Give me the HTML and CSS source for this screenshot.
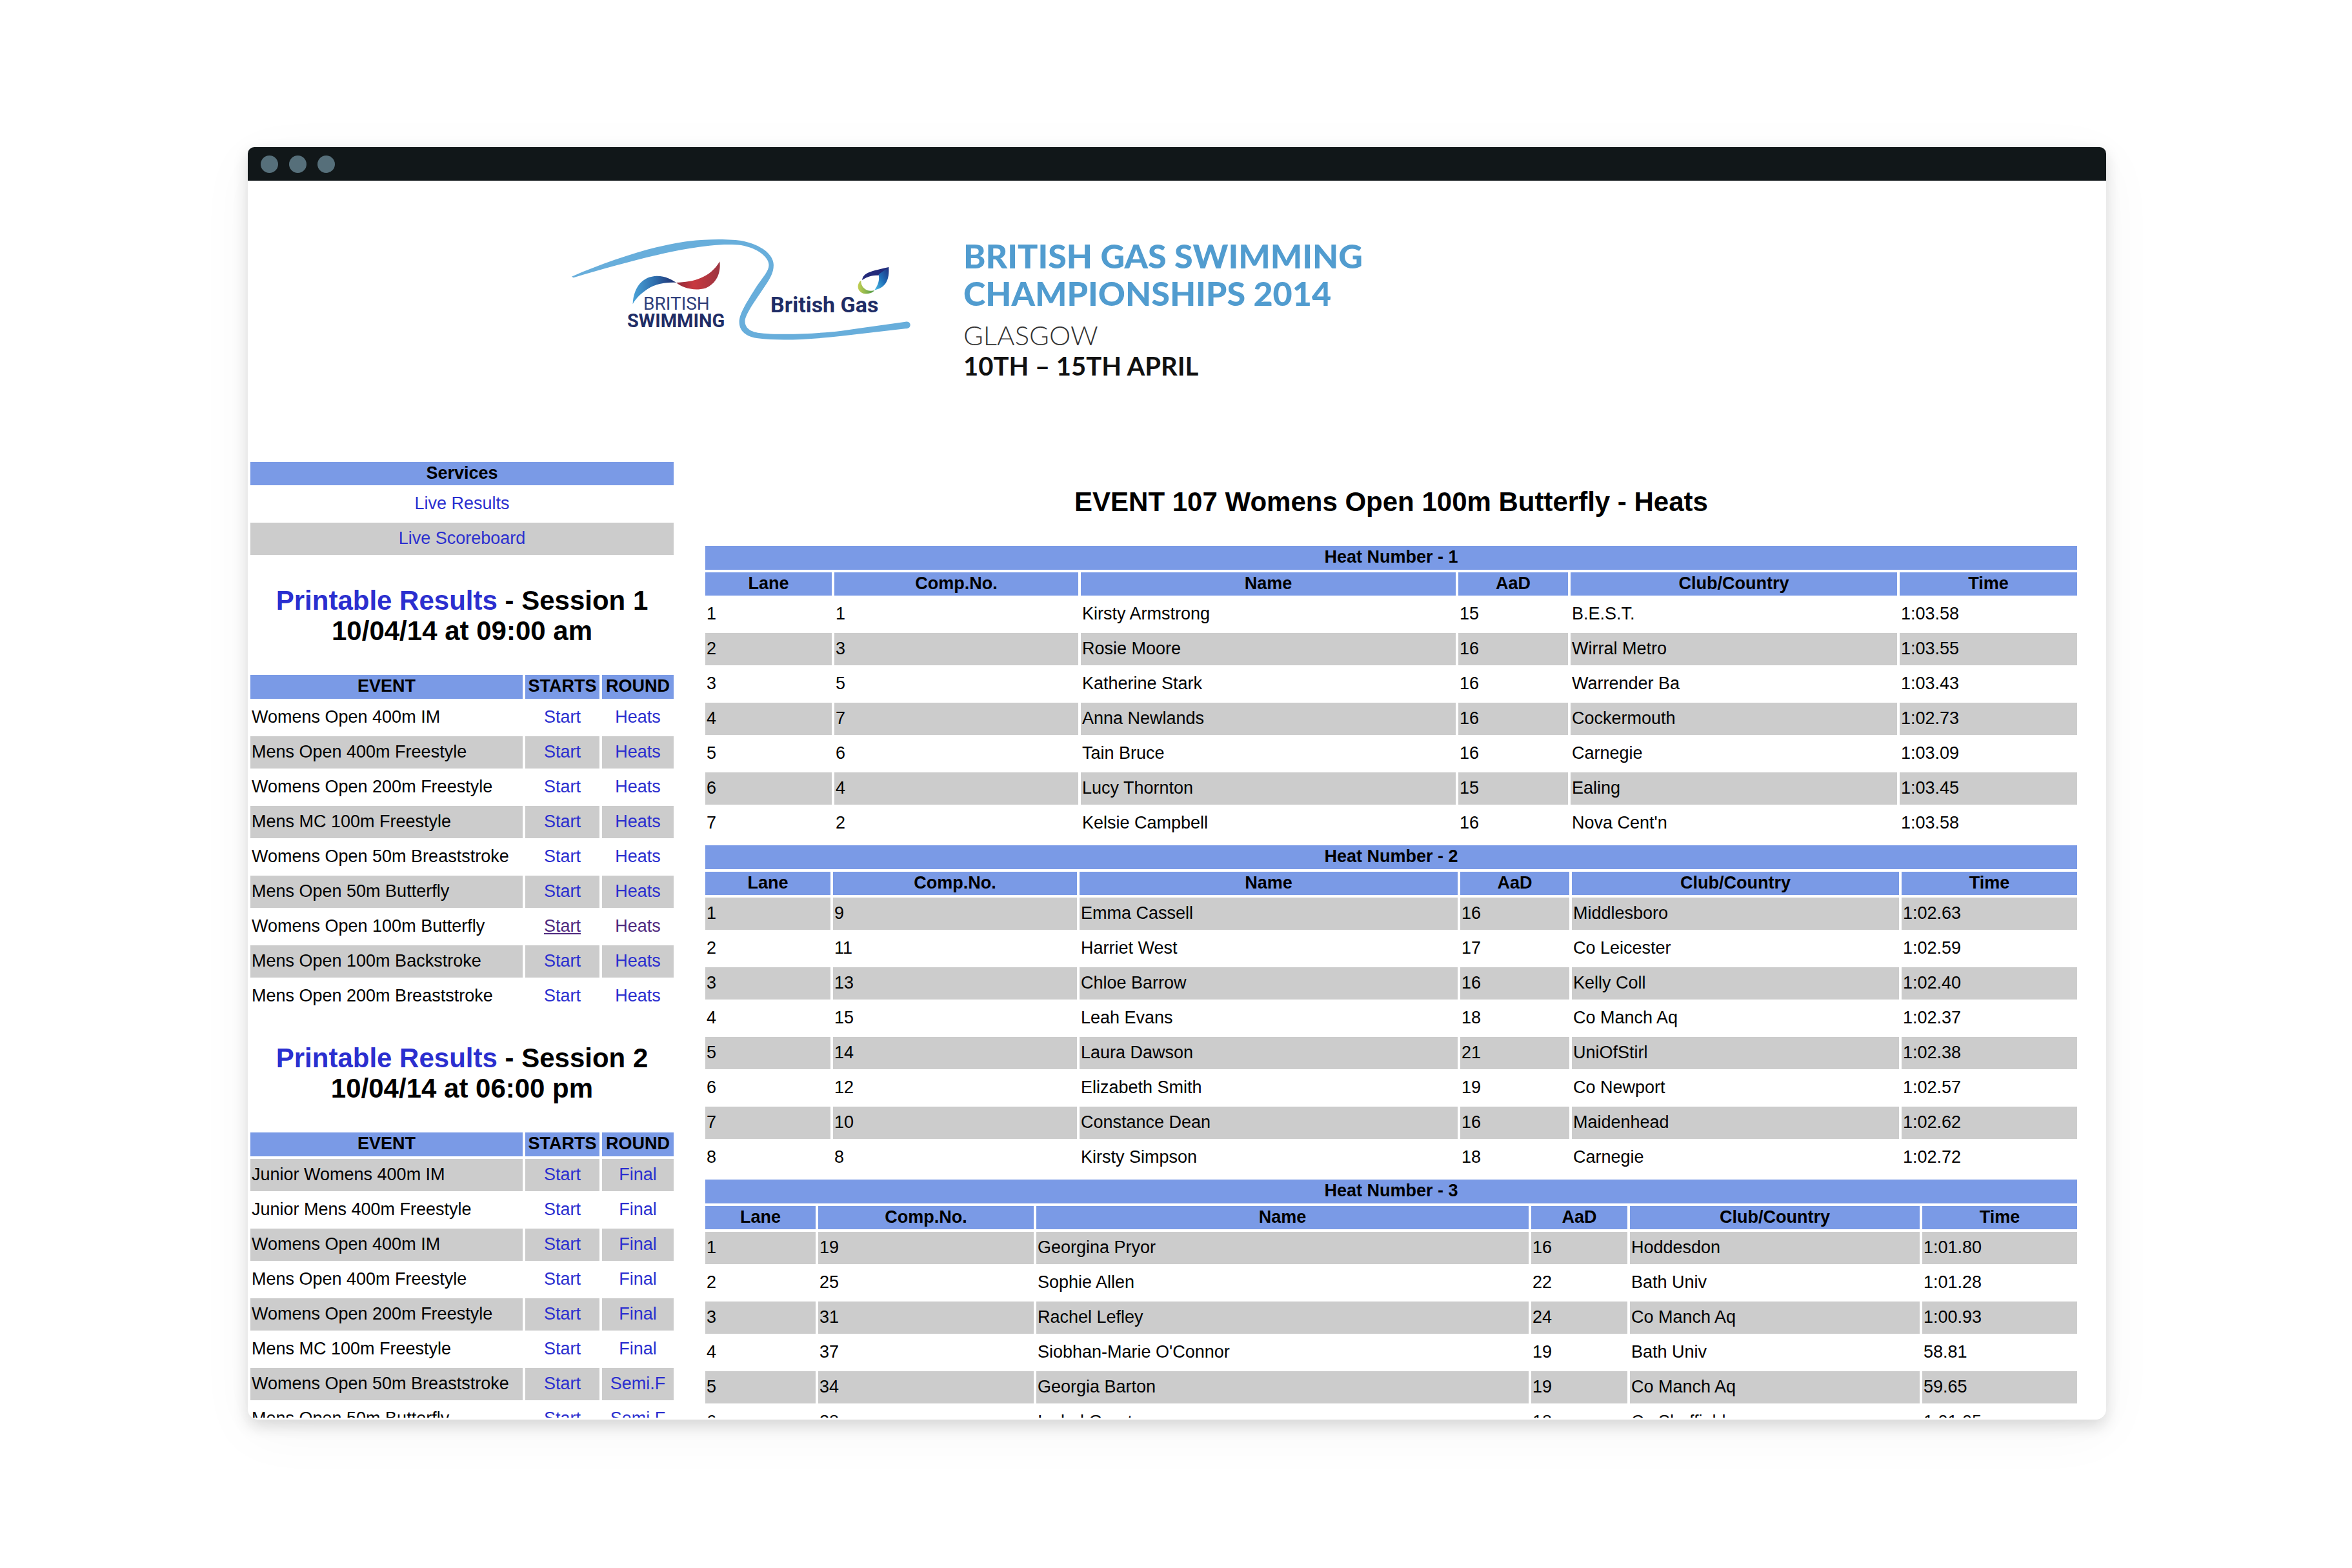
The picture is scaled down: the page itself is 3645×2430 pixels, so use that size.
FILE: index.html
```html
<!DOCTYPE html>
<html lang="en">
<head>
<meta charset="utf-8">
<title>British Gas Swimming Championships 2014 - Results</title>
<link rel="stylesheet" href="styles.css">
</head>
<body>
<div class="window">
  <div class="titlebar"><span class="dot"></span><span class="dot"></span><span class="dot"></span></div>
  <div class="viewport">
    <header class="banner">
      <svg class="logo" viewBox="0 0 580 220" role="img" aria-label="British Swimming and British Gas">
        <defs>
          <linearGradient id="wave" x1="0" x2="1"><stop offset="0" stop-color="#4aa3d8"/><stop offset=".5" stop-color="#2f6fae"/><stop offset="1" stop-color="#1d2a6b"/></linearGradient>
          <linearGradient id="red" x1="0" x2="1"><stop offset="0" stop-color="#8c2a38"/><stop offset=".4" stop-color="#c8383f"/><stop offset="1" stop-color="#9c3440"/></linearGradient>
          <linearGradient id="flame" x1="1" y1="0" x2="0" y2="1"><stop offset="0" stop-color="#1f2d7c"/><stop offset=".5" stop-color="#1f6fb8"/><stop offset="1" stop-color="#4fc0e8"/></linearGradient>
          <linearGradient id="leaf" x1="0" x2="1"><stop offset="0" stop-color="#c3cf52"/><stop offset="1" stop-color="#4f9a48"/></linearGradient>
        </defs>
        <g transform="scale(.37 .3333)">
          <path fill="#68aedb" d="M70 266C240 185 430 118 560 101C640 90 740 90 790 101C860 118 916 160 916 212C916 250 900 275 880 310C850 362 796 440 796 474C796 500 812 520 850 527C940 540 1090 532 1200 518L1468 476C1484 474 1490 484 1488 494C1486 504 1478 508 1468 508L1200 542C1080 558 940 566 850 553C800 547 772 518 772 478C772 440 800 390 848 306C870 270 896 240 896 212C896 176 850 134 780 120C720 112 640 120 560 136C430 160 250 214 78 271Z"/>
          <path fill="url(#wave)" d="M326 394C330 310 370 264 428 263C464 263 490 280 508 294C470 292 430 298 400 316C366 338 342 362 326 394Z"/>
          <path fill="url(#red)" d="M508 294C580 292 650 272 690 196C696 250 676 300 630 320C580 334 536 318 508 294Z"/>
          <path fill="#232a7a" d="M1287 283C1290 245 1330 240 1398 222C1390 250 1370 262 1345 260C1320 262 1300 270 1287 283Z"/>
          <path fill="url(#flame)" d="M1398 222C1402 280 1386 318 1338 329C1354 305 1360 285 1356 256Z"/>
          <path fill="url(#leaf)" d="M1282 284C1262 300 1264 340 1300 346C1318 346 1332 340 1338 330C1310 340 1280 318 1282 284Z"/>
        </g>
        <text class="logo-light" x="137" y="140">BRITISH</text>
        <text class="logo-bold" x="112" y="167">SWIMMING</text>
        <text class="logo-gas" x="334" y="144">British Gas</text>
      </svg>
      <div class="banner-text">
        <p class="meet">BRITISH GAS SWIMMING<br>CHAMPIONSHIPS 2014</p>
        <p class="city">GLASGOW</p>
        <p class="dates">10TH – 15TH APRIL</p>
      </div>
    </header>
    <div class="columns">
      <aside class="sidebar">
        <table class="grid services">
          <thead><tr><th>Services</th></tr></thead>
          <tbody>
            <tr><td><a href="#results">Live Results</a></td></tr>
            <tr class="shade"><td><a href="#scoreboard">Live Scoreboard</a></td></tr>
          </tbody>
        </table>

        <h2><a href="#s1">Printable Results</a> - Session 1<br>10/04/14 at 09:00 am</h2>
        <table class="grid events">
          <colgroup><col><col class="w-starts"><col class="w-round"></colgroup>
          <thead><tr><th>EVENT</th><th>STARTS</th><th>ROUND</th></tr></thead>
          <tbody>
            <tr><td>Womens Open 400m IM</td><td><a href="#">Start</a></td><td><a href="#">Heats</a></td></tr>
            <tr class="shade"><td>Mens Open 400m Freestyle</td><td><a href="#">Start</a></td><td><a href="#">Heats</a></td></tr>
            <tr><td>Womens Open 200m Freestyle</td><td><a href="#">Start</a></td><td><a href="#">Heats</a></td></tr>
            <tr class="shade"><td>Mens MC 100m Freestyle</td><td><a href="#">Start</a></td><td><a href="#">Heats</a></td></tr>
            <tr><td>Womens Open 50m Breaststroke</td><td><a href="#">Start</a></td><td><a href="#">Heats</a></td></tr>
            <tr class="shade"><td>Mens Open 50m Butterfly</td><td><a href="#">Start</a></td><td><a href="#">Heats</a></td></tr>
            <tr><td>Womens Open 100m Butterfly</td><td><a class="seen current" href="#">Start</a></td><td><a class="seen" href="#">Heats</a></td></tr>
            <tr class="shade"><td>Mens Open 100m Backstroke</td><td><a href="#">Start</a></td><td><a href="#">Heats</a></td></tr>
            <tr><td>Mens Open 200m Breaststroke</td><td><a href="#">Start</a></td><td><a href="#">Heats</a></td></tr>
          </tbody>
        </table>

        <h2><a href="#s2">Printable Results</a> - Session 2<br>10/04/14 at 06:00 pm</h2>
        <table class="grid events">
          <colgroup><col><col class="w-starts"><col class="w-round"></colgroup>
          <thead><tr><th>EVENT</th><th>STARTS</th><th>ROUND</th></tr></thead>
          <tbody>
            <tr class="shade"><td>Junior Womens 400m IM</td><td><a href="#">Start</a></td><td><a href="#">Final</a></td></tr>
            <tr><td>Junior Mens 400m Freestyle</td><td><a href="#">Start</a></td><td><a href="#">Final</a></td></tr>
            <tr class="shade"><td>Womens Open 400m IM</td><td><a href="#">Start</a></td><td><a href="#">Final</a></td></tr>
            <tr><td>Mens Open 400m Freestyle</td><td><a href="#">Start</a></td><td><a href="#">Final</a></td></tr>
            <tr class="shade"><td>Womens Open 200m Freestyle</td><td><a href="#">Start</a></td><td><a href="#">Final</a></td></tr>
            <tr><td>Mens MC 100m Freestyle</td><td><a href="#">Start</a></td><td><a href="#">Final</a></td></tr>
            <tr class="shade"><td>Womens Open 50m Breaststroke</td><td><a href="#">Start</a></td><td><a href="#">Semi.F</a></td></tr>
            <tr><td>Mens Open 50m Butterfly</td><td><a href="#">Start</a></td><td><a href="#">Semi.F</a></td></tr>
          </tbody>
        </table>
      </aside>

      <main class="results">
        <h1>EVENT 107 Womens Open 100m Butterfly - Heats</h1>
        <div class="heats">
          <table class="grid heat">
            <colgroup><col class="a-lane"><col class="a-comp"><col><col class="a-aad"><col class="a-club"><col class="a-time"></colgroup>
            <thead>
              <tr><th colspan="6">Heat Number - 1</th></tr>
              <tr class="labels"><th>Lane</th><th>Comp.No.</th><th>Name</th><th>AaD</th><th>Club/Country</th><th>Time</th></tr>
            </thead>
            <tbody>
              <tr><td>1</td><td>1</td><td>Kirsty Armstrong</td><td>15</td><td>B.E.S.T.</td><td>1:03.58</td></tr>
              <tr class="shade"><td>2</td><td>3</td><td>Rosie Moore</td><td>16</td><td>Wirral Metro</td><td>1:03.55</td></tr>
              <tr><td>3</td><td>5</td><td>Katherine Stark</td><td>16</td><td>Warrender Ba</td><td>1:03.43</td></tr>
              <tr class="shade"><td>4</td><td>7</td><td>Anna Newlands</td><td>16</td><td>Cockermouth</td><td>1:02.73</td></tr>
              <tr><td>5</td><td>6</td><td>Tain Bruce</td><td>16</td><td>Carnegie</td><td>1:03.09</td></tr>
              <tr class="shade"><td>6</td><td>4</td><td>Lucy Thornton</td><td>15</td><td>Ealing</td><td>1:03.45</td></tr>
              <tr><td>7</td><td>2</td><td>Kelsie Campbell</td><td>16</td><td>Nova Cent'n</td><td>1:03.58</td></tr>
            </tbody>
          </table>
          <table class="grid heat">
            <colgroup><col class="b-lane"><col class="a-comp"><col><col class="b-aad"><col class="b-club"><col class="b-time"></colgroup>
            <thead>
              <tr><th colspan="6">Heat Number - 2</th></tr>
              <tr class="labels"><th>Lane</th><th>Comp.No.</th><th>Name</th><th>AaD</th><th>Club/Country</th><th>Time</th></tr>
            </thead>
            <tbody>
              <tr class="shade"><td>1</td><td>9</td><td>Emma Cassell</td><td>16</td><td>Middlesboro</td><td>1:02.63</td></tr>
              <tr><td>2</td><td>11</td><td>Harriet West</td><td>17</td><td>Co Leicester</td><td>1:02.59</td></tr>
              <tr class="shade"><td>3</td><td>13</td><td>Chloe Barrow</td><td>16</td><td>Kelly Coll</td><td>1:02.40</td></tr>
              <tr><td>4</td><td>15</td><td>Leah Evans</td><td>18</td><td>Co Manch Aq</td><td>1:02.37</td></tr>
              <tr class="shade"><td>5</td><td>14</td><td>Laura Dawson</td><td>21</td><td>UniOfStirl</td><td>1:02.38</td></tr>
              <tr><td>6</td><td>12</td><td>Elizabeth Smith</td><td>19</td><td>Co Newport</td><td>1:02.57</td></tr>
              <tr class="shade"><td>7</td><td>10</td><td>Constance Dean</td><td>16</td><td>Maidenhead</td><td>1:02.62</td></tr>
              <tr><td>8</td><td>8</td><td>Kirsty Simpson</td><td>18</td><td>Carnegie</td><td>1:02.72</td></tr>
            </tbody>
          </table>
          <table class="grid heat">
            <colgroup><col class="c-lane"><col class="c-comp"><col><col class="c-aad"><col class="c-club"><col class="c-time"></colgroup>
            <thead>
              <tr><th colspan="6">Heat Number - 3</th></tr>
              <tr class="labels"><th>Lane</th><th>Comp.No.</th><th>Name</th><th>AaD</th><th>Club/Country</th><th>Time</th></tr>
            </thead>
            <tbody>
              <tr class="shade"><td>1</td><td>19</td><td>Georgina Pryor</td><td>16</td><td>Hoddesdon</td><td>1:01.80</td></tr>
              <tr><td>2</td><td>25</td><td>Sophie Allen</td><td>22</td><td>Bath Univ</td><td>1:01.28</td></tr>
              <tr class="shade"><td>3</td><td>31</td><td>Rachel Lefley</td><td>24</td><td>Co Manch Aq</td><td>1:00.93</td></tr>
              <tr><td>4</td><td>37</td><td>Siobhan-Marie O'Connor</td><td>19</td><td>Bath Univ</td><td>58.81</td></tr>
              <tr class="shade"><td>5</td><td>34</td><td>Georgia Barton</td><td>19</td><td>Co Manch Aq</td><td>59.65</td></tr>
              <tr><td>6</td><td>28</td><td>Isobel Grant</td><td>18</td><td>Co Sheffield</td><td>1:01.05</td></tr>
            </tbody>
          </table>
        </div>
      </main>
    </div>
  </div>
</div>
</body>
</html>
```
FILE: styles.css
```css
* { box-sizing: border-box; }

body {
  min-height: 100vh;
  margin: 0;
  padding: 228px 381px 230px 384px;
  background: #fff;
  color: #000;
  font: 27px/31px "Liberation Sans", Arial, sans-serif;
}

.window {
  display: flex;
  flex-direction: column;
  height: calc(100vh - 458px);
  padding-bottom: 3px;
  background: #fff;
  border-radius: 10px 10px 16px 16px;
  box-shadow: 0 10px 24px rgba(0, 0, 0, .14), 0 20px 90px rgba(0, 0, 0, .04);
}

.titlebar {
  display: flex;
  flex: none;
  align-items: center;
  gap: 17px;
  height: 52px;
  padding-left: 20px;
  background: #111719;
  border-radius: 10px 10px 0 0;
}
.dot { width: 27px; height: 27px; border-radius: 50%; background: #566f7a; }

.viewport { flex: 1; min-height: 0; overflow: hidden; }

.banner {
  display: flex;
  gap: 53px;
  min-height: 432px;
  padding: 60px 0 0 476px;
}
.logo { flex: none; width: 580px; height: 220px; }
.logo text { fill: #1f2d66; font-family: Roboto, sans-serif; }
.logo .logo-light { font-size: 28px; fill: #2f3f7c; }
.logo .logo-bold { font-size: 29px; font-weight: 700; }
.logo .logo-gas { font-size: 34px; font-weight: 700; }

.banner-text { padding-top: 27px; font-family: Lato, sans-serif; }
.banner-text p { margin: 0; }
.banner-text .meet { color: #519ccf; font-size: 52px; font-weight: 900; line-height: 58px; }
.banner-text .city { margin-top: 12px; color: #333; font-size: 42px; font-weight: 300; line-height: 48px; }
.banner-text .dates { color: #111; font-size: 40px; font-weight: 700; line-height: 48px; }

.columns { display: flex; gap: 41px; padding-right: 41px; }
.sidebar { flex: none; width: 664px; }
.results { flex: 1; min-width: 0; }
.heats { display: flex; flex-direction: column; gap: 1px; }

h1, h2 { font-size: 42px; line-height: 47px; text-align: center; }
h1 { margin: 42px 0 41px; }
h2 { margin: 43px 0 41px; }

a { color: #2b2fcf; text-decoration: none; }
a.seen { color: #4f2a80; }
a.current { text-decoration: underline; }

.grid { width: 100%; border-spacing: 4px; table-layout: fixed; }
.grid th { height: 37px; padding: 0 0 2px; background: #7a9ae6; }
.grid td { height: 50px; padding: 0 2px 2px; white-space: nowrap; }
.grid .labels th, .services th { height: 36px; }
.shade td { background: #ccc; }
.services td, .events td + td { text-align: center; }

.w-starts { width: 115px; }
.w-round { width: 111px; }

/* heat 1 */
.a-lane { width: 196px; }
.a-comp { width: 378px; }
.a-aad { width: 170px; }
.a-club { width: 506px; }
.a-time { width: 275px; }

/* heat 2 */
.b-lane { width: 194px; }
.b-aad { width: 169px; }
.b-club { width: 507px; }
.b-time { width: 272px; }

/* heat 3 */
.c-lane { width: 171px; }
.c-comp { width: 334px; }
.c-aad { width: 149px; }
.c-club { width: 449px; }
.c-time { width: 240px; }
```
